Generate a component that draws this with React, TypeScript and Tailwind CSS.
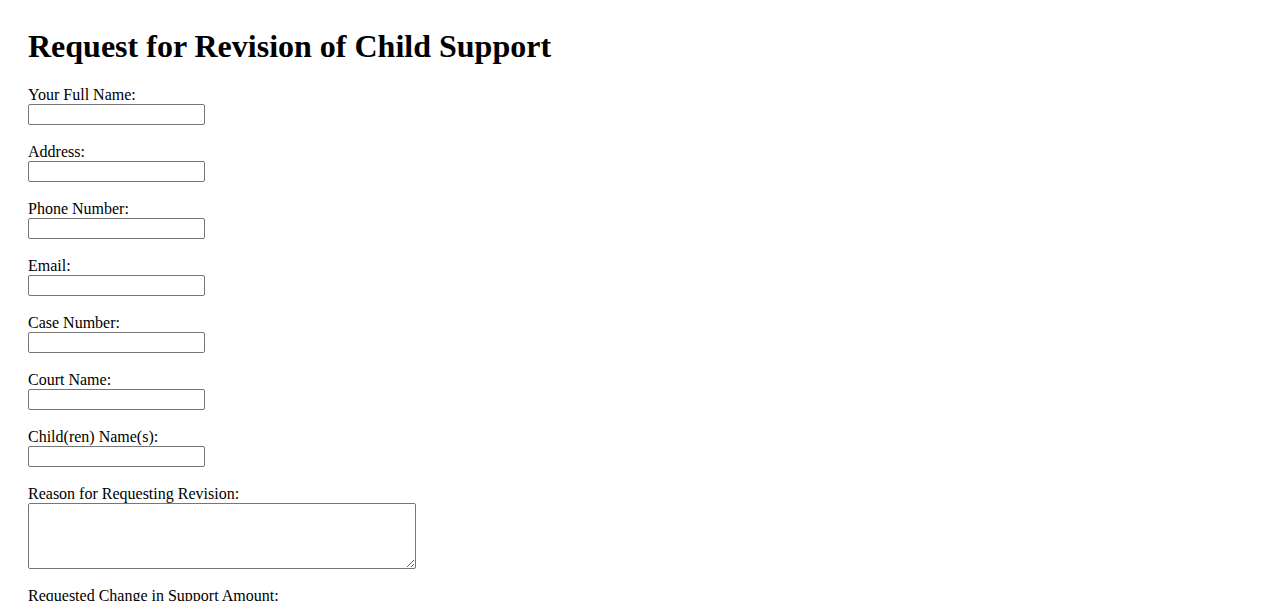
import React from "react";

const fields = [
  "Your Full Name:",
  "Address:",
  "Phone Number:",
  "Email:",
  "Case Number:",
  "Court Name:",
  "Child(ren) Name(s):",
];

export default function App() {
  return (
    <div className="min-h-screen bg-white text-black px-[28px] pt-[28px] pb-8 font-['Liberation_Serif',_'Times_New_Roman',_serif] text-[16px]">
      <h1 className="text-[32px] font-bold leading-[37px] mb-[21px]">
        Request for Revision of Child Support
      </h1>
      <form className="flex flex-col">
        {fields.map((label) => (
          <div key={label} className="flex flex-col items-start mb-[18px]">
            <label className="leading-[18px] h-[18px]">{label}</label>
            <input
              type="text"
              className="w-[177px] h-[21px] border border-[#767676] rounded-[2px] px-[2px] text-[13px] font-['Liberation_Sans',_Arial,_sans-serif]"
            />
          </div>
        ))}
        <div className="flex flex-col items-start mb-[18px]">
          <label className="leading-[18px] h-[18px]">Reason for Requesting Revision:</label>
          <textarea className="w-[388px] h-[66px] border border-[#767676] rounded-[2px] px-[2px] text-[13px] font-['Liberation_Mono',_monospace]" />
        </div>
        <div className="flex flex-col items-start mb-[18px]">
          <label className="leading-[18px] h-[18px]">Requested Change in Support Amount:</label>
          <input
            type="text"
            className="w-[177px] h-[21px] border border-[#767676] rounded-[2px] px-[2px] text-[13px] font-['Liberation_Sans',_Arial,_sans-serif]"
          />
        </div>
        <div className="flex flex-col items-start mb-[18px]">
          <label className="leading-[18px] h-[18px]">Signature:</label>
          <input
            type="text"
            className="w-[177px] h-[21px] border border-[#767676] rounded-[2px] px-[2px] text-[13px] font-['Liberation_Sans',_Arial,_sans-serif]"
          />
        </div>
        <div>
          <button
            type="submit"
            className="border border-[#767676] bg-[#efefef] rounded-[2px] px-[6px] py-[1px] text-[13px] font-['Liberation_Sans',_Arial,_sans-serif]"
          >
            Submit Request
          </button>
        </div>
      </form>
    </div>
  );
}
